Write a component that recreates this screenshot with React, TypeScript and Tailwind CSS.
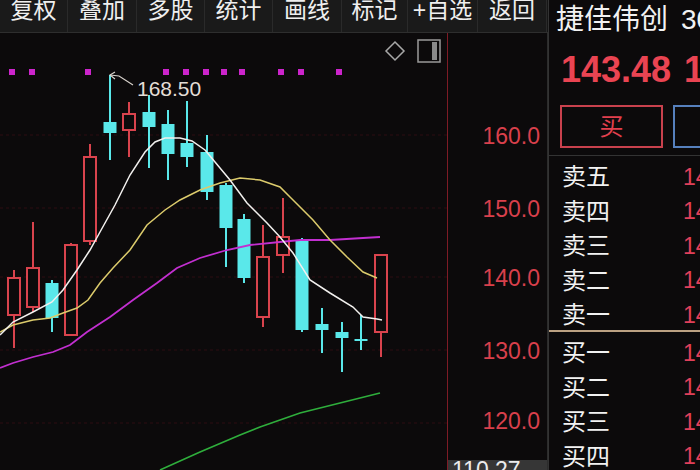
import { Fragment } from 'react'

const RED = '#d9434d'
const CYAN = '#5ae8ea'

interface Candle {
  readonly x: number
  readonly hi: number
  readonly top: number
  readonly bot: number
  readonly lo: number
  readonly up: boolean
}

// pixel coords taken off the price scale (160 -> 135, 120 -> 420)
const candles: Candle[] = [
  { x: 14, hi: 270, top: 278, bot: 315, lo: 348, up: true },
  { x: 33, hi: 222, top: 268, bot: 307, lo: 312, up: true },
  { x: 52, hi: 280, top: 283, bot: 318, lo: 332, up: false },
  { x: 71, hi: 243, top: 245, bot: 335, lo: 335, up: true },
  { x: 90, hi: 144, top: 157, bot: 241, lo: 245, up: true },
  { x: 110, hi: 75, top: 122, bot: 133, lo: 160, up: false },
  { x: 129, hi: 102, top: 114, bot: 130, lo: 157, up: true },
  { x: 149, hi: 95, top: 112, bot: 127, lo: 168, up: false },
  { x: 168, hi: 110, top: 124, bot: 154, lo: 180, up: false },
  { x: 187, hi: 101, top: 143, bot: 157, lo: 167, up: false },
  { x: 207, hi: 135, top: 152, bot: 192, lo: 200, up: false },
  { x: 226, hi: 183, top: 185, bot: 228, lo: 267, up: false },
  { x: 244, hi: 214, top: 219, bot: 278, lo: 283, up: false },
  { x: 263, hi: 225, top: 257, bot: 317, lo: 327, up: true },
  { x: 283, hi: 198, top: 237, bot: 255, lo: 273, up: true },
  { x: 302, hi: 238, top: 240, bot: 330, lo: 332, up: false },
  { x: 322, hi: 308, top: 324, bot: 330, lo: 353, up: false },
  { x: 342, hi: 322, top: 332, bot: 338, lo: 372, up: false },
  { x: 361, hi: 315, top: 339, bot: 341, lo: 350, up: false },
  { x: 381, hi: 255, top: 255, bot: 332, lo: 357, up: true },
]

const ma5 = [[0, 335], [13, 322], [33, 312], [52, 302], [63, 290], [77, 270], [90, 250], [100, 232], [115, 205], [130, 175], [145, 152], [155, 142], [165, 138], [180, 138], [192, 141], [205, 150], [215, 162], [230, 180], [247, 203], [267, 223], [280, 237], [293, 253], [310, 280], [330, 293], [353, 307], [363, 317], [377, 319], [382, 320]]
const ma10 = [[0, 332], [13, 325], [33, 320], [50, 318], [63, 313], [77, 308], [88, 300], [100, 283], [113, 268], [130, 250], [147, 225], [165, 210], [180, 200], [200, 190], [220, 183], [240, 178], [260, 180], [280, 187], [290, 197], [313, 220], [330, 240], [347, 257], [363, 272], [377, 278]]
const ma20 = [[0, 368], [13, 363], [33, 357], [53, 352], [70, 345], [87, 332], [110, 317], [133, 300], [157, 283], [177, 268], [200, 258], [227, 250], [250, 245], [280, 242], [300, 240], [330, 240], [363, 238], [380, 237]]
const ma60 = [[160, 470], [200, 452], [240, 435], [260, 427], [300, 413], [340, 403], [380, 393]]

const dots = [12, 32, 88, 166, 186, 206, 224, 242, 281, 301, 339]

const toolbar = [
  { label: '复权', w: 'w-[68px]' },
  { label: '叠加', w: 'w-[69px]' },
  { label: '多股', w: 'w-[68px]' },
  { label: '统计', w: 'w-[68px]' },
  { label: '画线', w: 'w-[69px]' },
  { label: '标记', w: 'w-[66px]' },
  { label: '+自选', w: 'w-[70px]' },
  { label: '返回', w: 'w-[69px]' },
]

const axisLabels = [
  { label: '160.0', top: 'top-[92px]' },
  { label: '150.0', top: 'top-[165px]' },
  { label: '140.0', top: 'top-[234px]' },
  { label: '130.0', top: 'top-[307px]' },
  { label: '120.0', top: 'top-[377px]' },
]

const sells = [
  { label: '卖五', price: '143.90' },
  { label: '卖四', price: '143.80' },
  { label: '卖三', price: '143.70' },
  { label: '卖二', price: '143.60' },
  { label: '卖一', price: '143.50' },
]

const buys = [
  { label: '买一', price: '143.48' },
  { label: '买二', price: '143.45' },
  { label: '买三', price: '143.40' },
  { label: '买四', price: '143.35' },
]

function pts(list: number[][]) {
  return list.map(([x, y]) => `${x},${y}`).join(' ')
}

function KlineChart() {
  return (
    <svg className="block shrink-0" height={437} viewBox="0 33 447 437" width={447}>
      {[135, 208, 277, 350, 423].map(y => (
        <line key={y} stroke="#2c0d12" strokeDasharray="3 3" strokeWidth={1} x1={0} x2={447} y1={y} y2={y} />
      ))}

      {candles.map(c => (
        <Fragment key={c.x}>
          <line stroke={c.up ? RED : CYAN} strokeWidth={2} x1={c.x} x2={c.x} y1={c.hi} y2={c.lo} />
          {c.up
            ? <rect fill="#0c0a0b" height={c.bot - c.top} stroke={RED} strokeWidth={2} width={12} x={c.x - 6} y={c.top} />
            : <rect fill={CYAN} height={Math.max(c.bot - c.top, 2)} width={13} x={c.x - 6.5} y={c.top} />}
        </Fragment>
      ))}

      <polyline fill="none" points={pts(ma60)} stroke="#2fae3c" strokeWidth={1.6} />
      <polyline fill="none" points={pts(ma20)} stroke="#c22fd0" strokeWidth={1.8} />
      <polyline fill="none" points={pts(ma10)} stroke="#dccb6c" strokeWidth={1.5} />
      <polyline fill="none" points={pts(ma5)} stroke="#f2f0ee" strokeWidth={1.5} />

      {dots.map(x => (
        <rect fill="#cc24cc" height={6} key={x} width={6} x={x - 3} y={69} />
      ))}

      {/* high marker */}
      <polyline fill="none" points="110,75 119,76 133,85" stroke="#d8d2cc" strokeWidth={1.2} />
      <polyline fill="none" points="115,72 110,75 115,79" stroke="#d8d2cc" strokeWidth={1.2} />
      <text fill="#e4ddd6" fontFamily="Liberation Sans, sans-serif" fontSize={21} x={137} y={96}>168.50</text>

      {/* top right tools */}
      <polygon fill="none" points="395,42 404,51 395,60 386,51" stroke="#a8a8a8" strokeWidth={1.5} />
      <rect fill="none" height={22} stroke="#9a9a9a" strokeWidth={1.5} width={22} x={418} y={40} />
      <rect fill="#8a8a8a" height={18} width={5} x={432} y={42} />
    </svg>
  )
}

function PriceAxis() {
  return (
    <div className="relative w-[101px] h-[437px] border-l border-[#7e1b25] border-r border-r-[#2c2c2c]">
      {axisLabels.map(a => (
        <div className={`absolute right-[7px] text-[23px] leading-none text-[#d9404c] ${a.top}`} key={a.label}>
          {a.label}
        </div>
      ))}
      <div className="absolute left-0 right-0 top-[427px] h-[12px] bg-[#363636] pl-[4px]">
        <div className="text-[23px] leading-none text-[#ececec] -mt-[1px]">110.27</div>
      </div>
    </div>
  )
}

function QuoteRow({ label, price }: { readonly label: string, readonly price: string }) {
  return (
    <div className="flex items-center h-[34.5px] pt-[8px]">
      <span className="w-[134px] shrink-0 pl-[13px] text-[24px] leading-none text-[#f2f2f2]">{label}</span>
      <span className="shrink-0 text-[23px] leading-none text-[#e0405a]">{price}</span>
    </div>
  )
}

export default function App() {
  return (
    <div className="w-[700px] h-[470px] overflow-hidden bg-[#0c0a0b] flex font-['Liberation_Sans','Noto_Sans_CJK_SC',sans-serif]">
      <div className="w-[548px] shrink-0 flex flex-col">
        <div className="h-[33px] flex border-b border-[#2e2e2e] bg-[#161616]">
          {toolbar.map(t => (
            <div
              className={`${t.w} shrink-0 h-full flex justify-center items-center pb-[11px] border-r border-[#2a2a2a] bg-[#1a1a1a] text-[23px] leading-none text-[#efefef]`}
              key={t.label}
            >
              {t.label}
            </div>
          ))}
        </div>

        <div className="flex">
          <KlineChart />
          <PriceAxis />
        </div>
      </div>

      <div className="w-[152px] shrink-0 border-l border-[#333] flex flex-col whitespace-nowrap">
        <div className="h-[44px] pl-[7px] pt-[6px] flex text-[28px] leading-none text-[#f2f2f2]">
          <span className="shrink-0">捷佳伟创</span>
          <span className="shrink-0 ml-[13px]">300724</span>
        </div>

        <div className="h-[56px] flex items-start pl-[12px] pt-[8px] text-[#ea4452] leading-none">
          <span className="w-[123px] shrink-0 text-[36px] font-bold">143.48</span>
          <span className="shrink-0 text-[36px] font-bold">1.52%</span>
        </div>

        <div className="h-[57px] flex items-start pt-[6px] pl-[11px] gap-[10px] border-b border-[#333]">
          <div className="w-[103px] h-[43px] shrink-0 border-2 border-[#c9414d] flex items-center justify-center text-[24px] leading-none text-[#e2404e]">买</div>
          <div className="w-[103px] h-[43px] shrink-0 border-2 border-[#5680bd] flex items-center justify-center text-[24px] leading-none text-[#5d8fd6]">卖</div>
        </div>

        <div className="h-[177px] border-b-2 border-[#bba182]">
          {sells.map(s => <QuoteRow key={s.label} {...s} />)}
        </div>

        <div>
          {buys.map(b => <QuoteRow key={b.label} {...b} />)}
        </div>
      </div>
    </div>
  )
}
